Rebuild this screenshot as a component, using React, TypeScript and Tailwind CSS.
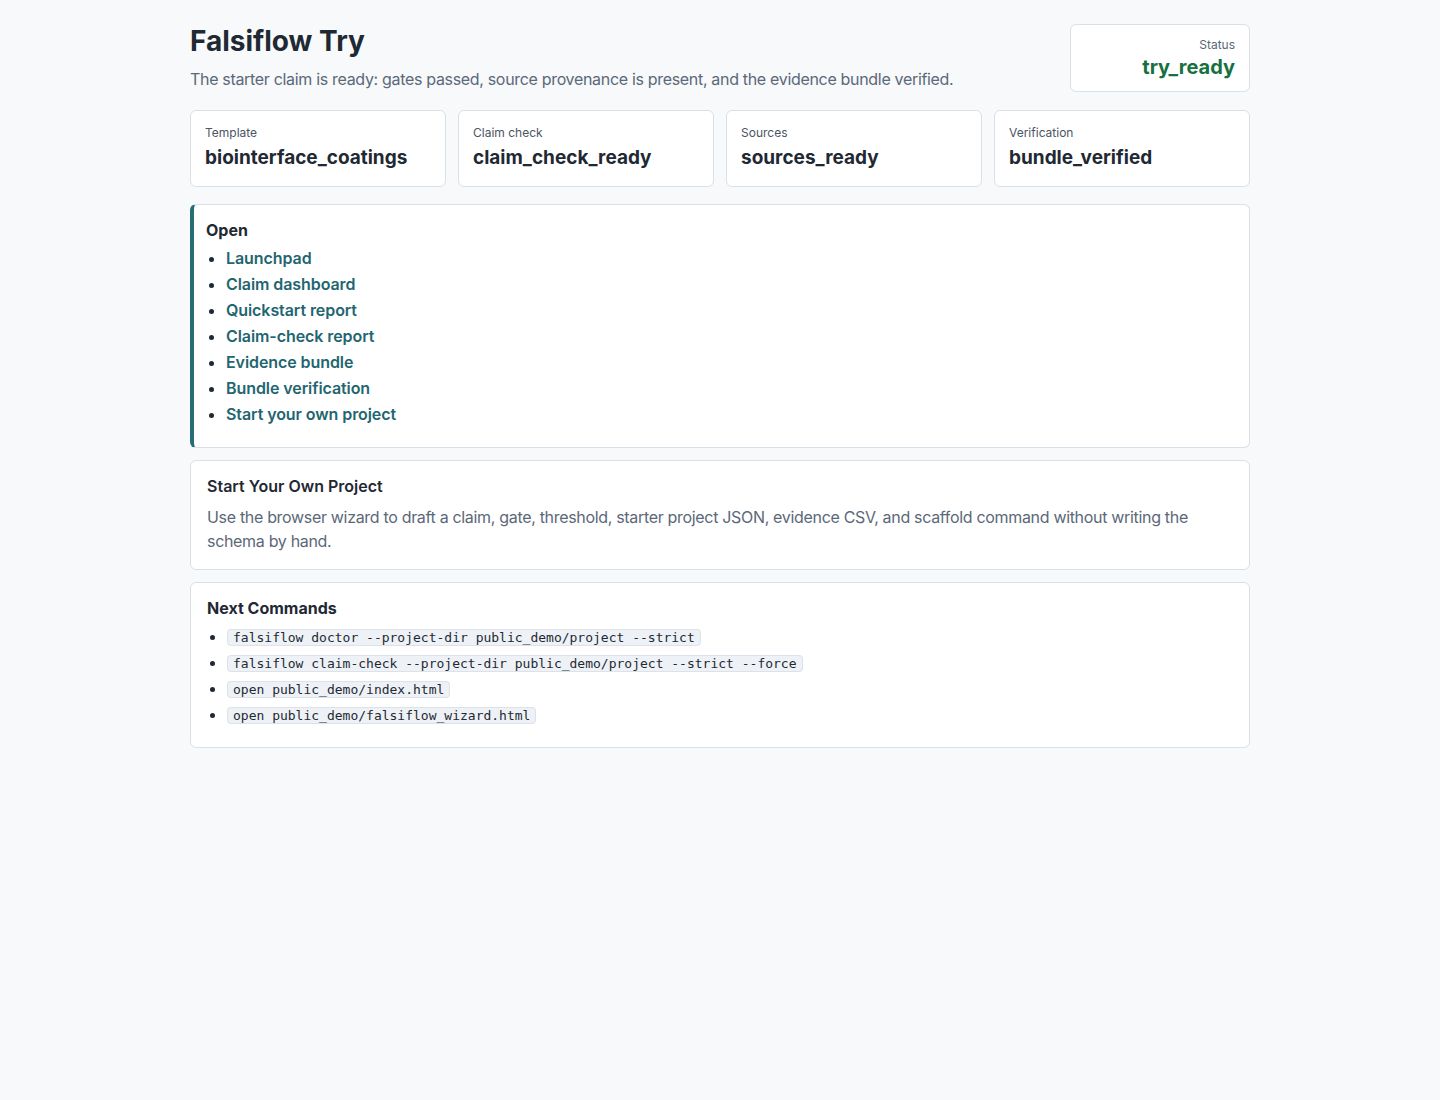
import React from "react";

const metrics = [
  { label: "Template", value: "biointerface_coatings" },
  { label: "Claim check", value: "claim_check_ready" },
  { label: "Sources", value: "sources_ready" },
  { label: "Verification", value: "bundle_verified" },
];

const links = [
  "Launchpad",
  "Claim dashboard",
  "Quickstart report",
  "Claim-check report",
  "Evidence bundle",
  "Bundle verification",
  "Start your own project",
];

const commands = [
  "falsiflow doctor --project-dir public_demo/project --strict",
  "falsiflow claim-check --project-dir public_demo/project --strict --force",
  "open public_demo/index.html",
  "open public_demo/falsiflow_wizard.html",
];

export default function App() {
  return (
    <div
      className="min-h-screen bg-[#f7f9fb] text-[#1f2933]"
      style={{ fontFamily: "Inter, 'Noto Sans', sans-serif" }}
    >
      <div className="max-w-[1060px] mx-auto pt-6 pb-10">
        {/* Header */}
        <div className="flex items-start justify-between gap-6">
          <div>
            <h1 className="text-[28px] leading-[34px] font-bold m-0">
              Falsiflow Try
            </h1>
            <p className="mt-[9px] text-base leading-6 tracking-[-0.02em] text-[#5b6878]">
              The starter claim is ready: gates passed, source provenance is present, and the evidence bundle verified.
            </p>
          </div>
          <div className="w-[180px] h-[68px] bg-white border border-[#d8e0e8] rounded-md px-[14px] pt-[12px] text-right">
            <div className="text-xs leading-4 text-[#5b6878]">Status</div>
            <div className="text-xl leading-7 font-bold text-[#17703f]">try_ready</div>
          </div>
        </div>

        {/* Metrics */}
        <div className="grid grid-cols-4 gap-3 mt-[18px]">
          {metrics.map((m) => (
            <div
              key={m.label}
              className="bg-white border border-[#d8e0e8] rounded-md px-[14px] pt-[14px] h-[77px]"
            >
              <div className="text-xs leading-4 text-[#4b5563]">{m.label}</div>
              <div className="text-[19px] leading-6 font-bold mt-[5px]">{m.value}</div>
            </div>
          ))}
        </div>

        {/* Open */}
        <div className="mt-[17px] bg-white border border-[#d8e0e8] border-l-4 border-l-[#266d78] rounded-md pl-3 pr-4 pt-[13px] pb-[20px]">
          <h2 className="text-base leading-6 font-bold">Open</h2>
          <ul className="list-disc pl-5 mt-[3px] marker:text-[#1f2933]">
            {links.map((l) => (
              <li key={l} className="leading-[26px]">
                <a href="#" className="text-base font-semibold tracking-[-0.005em] text-[#1f6670]">
                  {l}
                </a>
              </li>
            ))}
          </ul>
        </div>

        {/* Start your own project */}
        <div className="mt-3 bg-white border border-[#d8e0e8] rounded-md px-4 pt-[13px] pb-4">
          <h2 className="text-base leading-6 font-semibold">Start Your Own Project</h2>
          <p className="mt-[7px] text-base leading-6 tracking-[-0.02em] text-[#5b6878]">
            Use the browser wizard to draft a claim, gate, threshold, starter project JSON, evidence CSV, and scaffold command without writing the schema by hand.
          </p>
        </div>

        {/* Next commands */}
        <div className="mt-3 bg-white border border-[#d8e0e8] rounded-md px-4 pt-[13px] pb-[20px]">
          <h2 className="text-base leading-6 font-bold">Next Commands</h2>
          <ul className="list-disc pl-5 mt-[3px]">
            {commands.map((c) => (
              <li key={c} className="leading-[26px]">
                <code
                  className="text-[13px] leading-[18px] bg-[#eef2f6] border border-[#dbe2ea] rounded px-[5px] py-[0px] text-[#1f2933]"
                  style={{ fontFamily: "'DejaVu Sans Mono', monospace" }}
                >
                  {c}
                </code>
              </li>
            ))}
          </ul>
        </div>
      </div>
    </div>
  );
}
